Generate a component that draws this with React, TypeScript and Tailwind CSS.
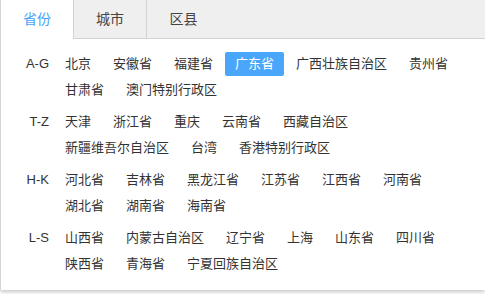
const groups: { label: string; items: string[] }[] = [
  {
    label: "A-G",
    items: ["北京", "安徽省", "福建省", "广东省", "广西壮族自治区", "贵州省", "甘肃省", "澳门特别行政区"],
  },
  {
    label: "T-Z",
    items: ["天津", "浙江省", "重庆", "云南省", "西藏自治区", "新疆维吾尔自治区", "台湾", "香港特别行政区"],
  },
  {
    label: "H-K",
    items: ["河北省", "吉林省", "黑龙江省", "江苏省", "江西省", "河南省", "湖北省", "湖南省", "海南省"],
  },
  {
    label: "L-S",
    items: ["山西省", "内蒙古自治区", "辽宁省", "上海", "山东省", "四川省", "陕西省", "青海省", "宁夏回族自治区"],
  },
];

const tabs = ["省份", "城市", "区县"];

export default function App() {
  return (
    <div className="w-[485px] h-[294px] bg-white font-['Liberation_Sans','Noto_Sans_CJK_SC',sans-serif]">
      <div className="h-[290px] bg-white border-l border-[#d4d4d4] shadow-[0_2px_4px_rgba(0,0,0,0.22)] flex flex-col">
        <div className="flex h-[39px] bg-[#efefef] border-b border-[#d2d2d2]">
          {tabs.map((t, i) => (
            <div
              key={t}
              className={`w-[73px] h-[39px] flex items-center justify-center text-[14px] ${
                i === 0 ? "bg-white text-[#46a3f7] border-r border-[#d2d2d2]" : i === 1 ? "text-[#444] border-r border-[#d2d2d2]" : "text-[#444]"
              }`}
            >
              {t}
            </div>
          ))}
        </div>

        <div className="flex flex-col gap-[8px] pt-[13px] pr-[14px]">
          {groups.map((g) => (
            <div key={g.label} className="flex">
              <span className="w-[48px] h-[24px] leading-[24px] text-right text-[13px] text-[#333] shrink-0">
                {g.label}
              </span>
              <div className="ml-[6px] flex-1 flex flex-wrap gap-[2px]">
                {g.items.map((p) => (
                  <span
                    key={p}
                    className={`h-[24px] leading-[24px] px-[10px] rounded-[2px] text-[13px] ${
                      p === "广东省" ? "bg-[#4aa6fa] text-white" : "text-[#333]"
                    }`}
                  >
                    {p}
                  </span>
                ))}
              </div>
            </div>
          ))}
        </div>
      </div>
    </div>
  );
}
